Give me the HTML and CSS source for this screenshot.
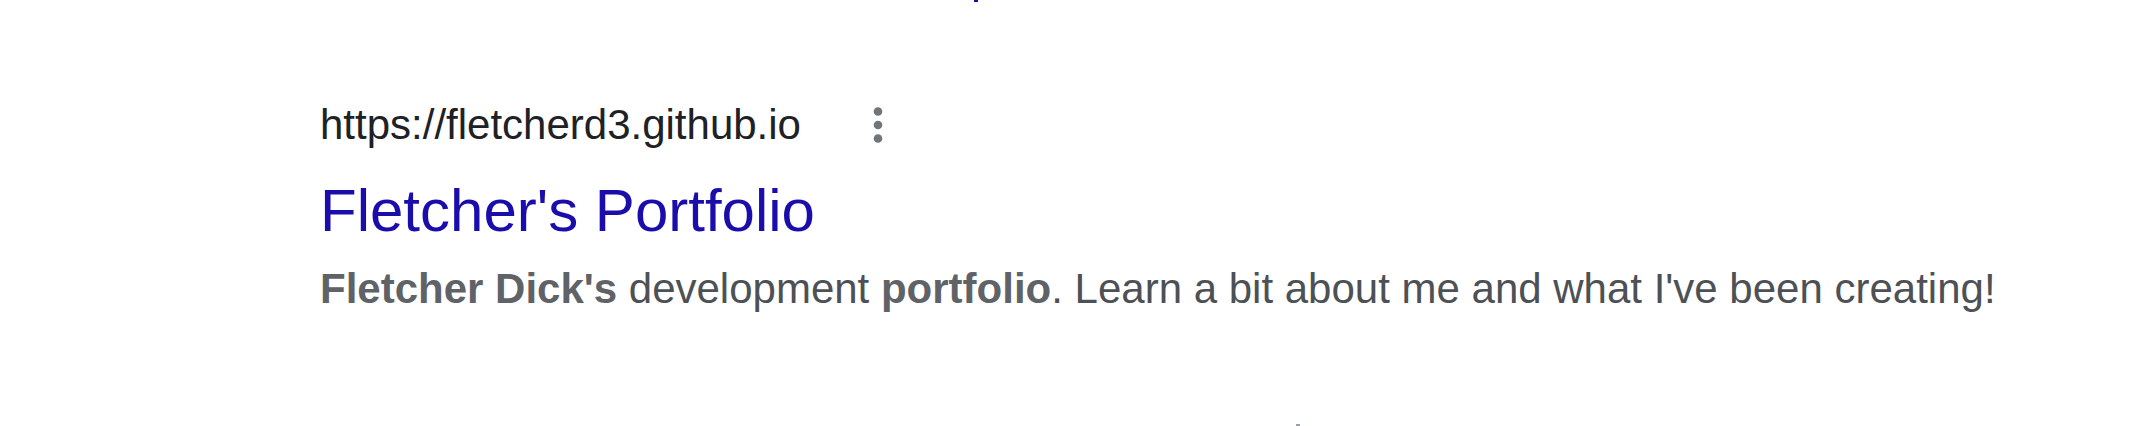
FILE: index.html
```html
<!DOCTYPE html>
<html lang="en">
<head>
<meta charset="utf-8">
<title>Fletcher's Portfolio</title>
<link rel="stylesheet" href="styles.css">
</head>
<body>
<div class="page">
  <span class="frag frag-top"></span>
  <div class="result">
    <div class="url-row">
      <cite class="url">https://fletcherd3.github.io</cite>
      <span class="kebab" aria-label="More options">
        <svg width="20" height="40" viewBox="0 0 20 40" aria-hidden="true">
          <circle cx="10" cy="6.5" r="4.3" fill="#70757a"/>
          <circle cx="10" cy="20" r="4.3" fill="#70757a"/>
          <circle cx="10" cy="33.5" r="4.3" fill="#70757a"/>
        </svg>
      </span>
    </div>
    <h3 class="title"><a href="#">Fletcher's Portfolio</a></h3>
    <div class="desc"><b>Fletcher Dick's</b> development <b>portfolio</b>. Learn a bit about me and what I've been creating!</div>
  </div>
  <span class="frag frag-bottom"></span>
</div>
</body>
</html>
```
FILE: styles.css
```css
html, body {
  margin: 0;
  padding: 0;
  background: #ffffff;
}
.page {
  position: relative;
  width: 2138px;
  height: 426px;
  overflow: hidden;
  font-family: Arial, "Liberation Sans", sans-serif;
}
.result {
  padding: 95px 0 0 320px;
  display: flex;
  flex-direction: column;
}
.url-row {
  display: flex;
  align-items: center;
  height: 60px;
}
.url {
  font-style: normal;
  font-size: 42px;
  line-height: 60px;
  color: #202124;
}
.kebab {
  display: flex;
  align-items: center;
  margin-left: 67px;
  margin-top: -1px;
}
.title {
  margin: 17px 0 0 0;
  font-weight: normal;
  font-size: 60px;
  line-height: 78px;
}
.title a {
  color: #1a0dab;
  text-decoration: none;
}
.desc {
  margin-top: 6px;
  font-size: 42px;
  line-height: 66px;
  color: #4d5156;
}
.desc b {
  color: #5f6368;
  font-weight: bold;
}
.frag {
  position: absolute;
  display: block;
  width: 4px;
  height: 2px;
}
.frag-top {
  left: 974px;
  top: 0;
  background: #1a0dab;
}
.frag-bottom {
  left: 1296px;
  top: 424px;
  background: #9aa0a6;
}
```
